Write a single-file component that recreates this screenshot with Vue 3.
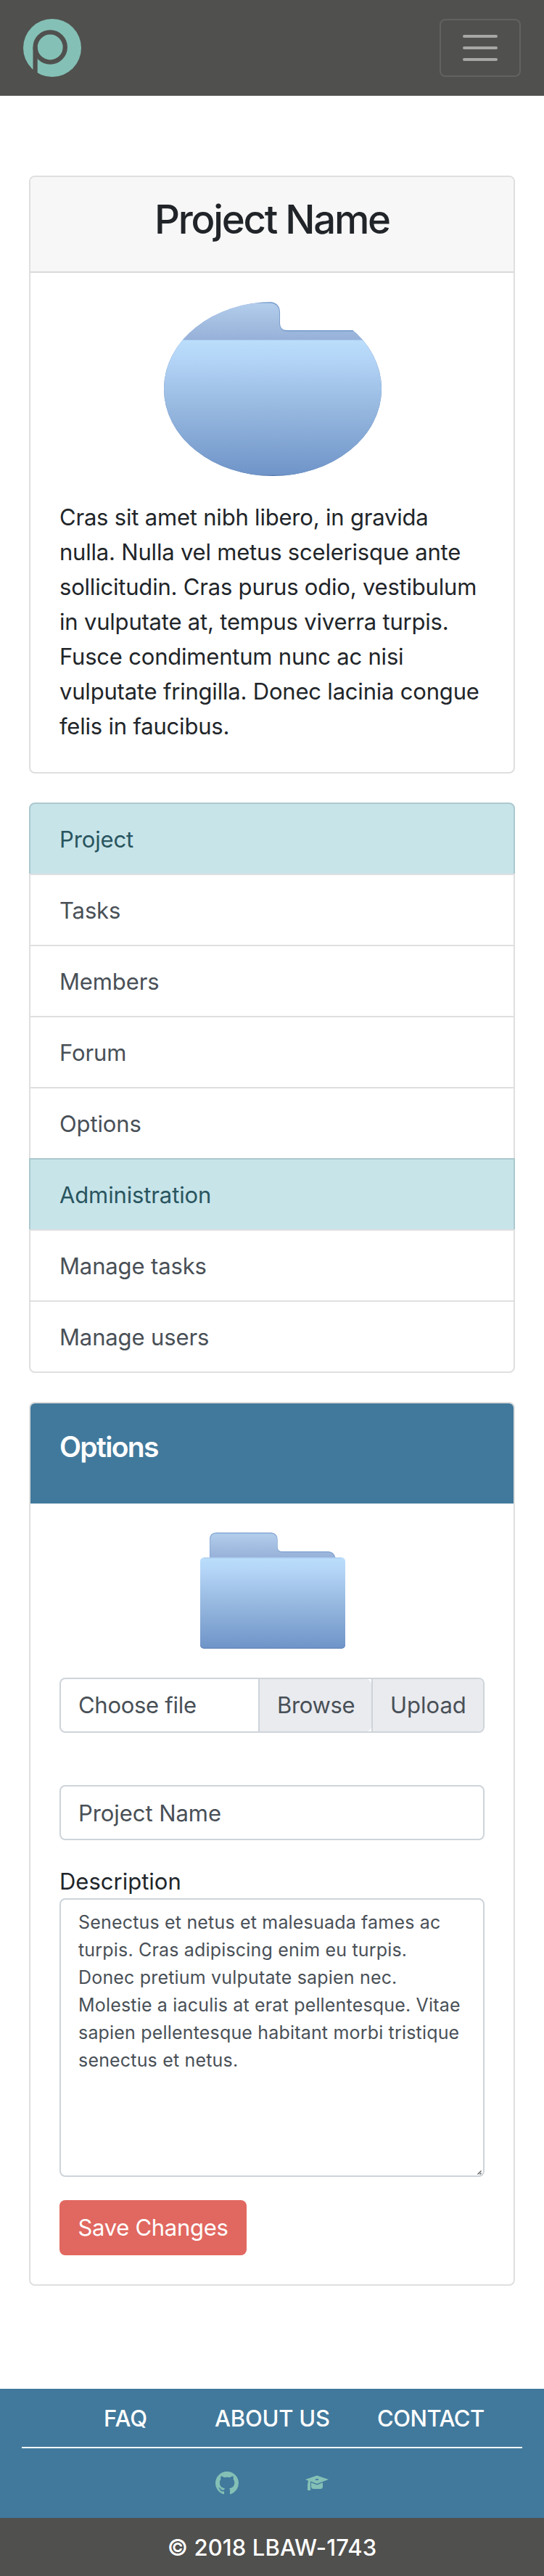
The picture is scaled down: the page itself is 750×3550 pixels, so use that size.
<script setup>
const projectText = [
  'Cras sit amet nibh libero, in gravida',
  'nulla. Nulla vel metus scelerisque ante',
  'sollicitudin. Cras purus odio, vestibulum',
  'in vulputate at, tempus viverra turpis.',
  'Fusce condimentum nunc ac nisi',
  'vulputate fringilla. Donec lacinia congue',
  'felis in faucibus.',
].join('\n')

const menu = [
  { label: 'Project', heading: true },
  { label: 'Tasks' },
  { label: 'Members' },
  { label: 'Forum' },
  { label: 'Options' },
  { label: 'Administration', heading: true },
  { label: 'Manage tasks' },
  { label: 'Manage users' },
]

const description = [
  'Senectus et netus et malesuada fames ac',
  'turpis. Cras adipiscing enim eu turpis.',
  'Donec pretium vulputate sapien nec.',
  'Molestie a iaculis at erat pellentesque. Vitae',
  'sapien pellentesque habitant morbi tristique',
  'senectus et netus.',
].join('\n')
</script>

<template>
  <div class="page">
    <svg class="defs" width="0" height="0" aria-hidden="true">
      <defs>
        <linearGradient id="tabFill" x1="0" y1="0" x2="0" y2="1">
          <stop offset="0" stop-color="#b3cdec" />
          <stop offset="1" stop-color="#92acd5" />
        </linearGradient>
        <linearGradient id="frontFill" x1="0" y1="0" x2="0" y2="1">
          <stop offset="0" stop-color="#bbdefc" />
          <stop offset="0.15" stop-color="#b3d4f6" />
          <stop offset="0.5" stop-color="#97b9e0" />
          <stop offset="1" stop-color="#6f94c8" />
        </linearGradient>
        <symbol id="folder" viewBox="0 0 200 160">
          <path d="M13 40V10Q13 0 22 0H98Q106.700 1 106.700 10V20Q107 26 113 26H177Q187 27 187 40Z" fill="#7da1d0" />
          <path d="M13.600 40V10.500Q14 1.200 22 1.200H98Q106 2 106 10.500V20.500Q107 27.200 113 27.200H177Q186 28 186.500 40Z" fill="url(#tabFill)" />
          <rect x="0" y="40" width="200" height="120" rx="5" fill="#4d73ab" />
          <rect x="0" y="34.600" width="200" height="124.600" rx="5" fill="url(#frontFill)" />
          <path d="M5 35H195" stroke="#a3c4e8" stroke-width="0.8" />
        </symbol>
      </defs>
    </svg>

    <header class="navbar">
      <svg class="logo" viewBox="0 0 80 80">
        <circle cx="40" cy="40" r="40" fill="#84c0b5" />
        <circle cx="37.200" cy="39" r="20.600" fill="none" stroke="#50504e" stroke-width="6.300" />
        <path d="M13.500 39H19.700V80H13.500Z" fill="#50504e" />
      </svg>
      <button class="toggler" aria-label="Toggle navigation">
        <svg width="60" height="60" viewBox="0 0 60 60">
          <path d="M8 14H52M8 30H52M8 46H52" stroke="#a7a7a6" stroke-width="4" stroke-linecap="round" />
        </svg>
      </button>
    </header>

    <main class="content">
      <section class="card">
        <div class="card-header"><h3>Project Name</h3></div>
        <div class="card-body">
          <svg class="round"><use href="#folder" /></svg>
          <p class="lead">{{ projectText }}</p>
        </div>
      </section>

      <nav class="menu">
        <a v-for="m in menu" :key="m.label" class="item" :class="{ heading: m.heading }">{{ m.label }}</a>
      </nav>

      <section class="card">
        <div class="options-header"><h5>Options</h5></div>
        <div class="card-body form-body">
          <svg class="thumb"><use href="#folder" /></svg>
          <div class="file-group">
            <span class="file-name">Choose file</span>
            <span class="browse"><span>Browse</span></span>
            <span class="upload">Upload</span>
          </div>
          <input class="name-input" value="Project Name" />
          <label class="label">Description</label>
          <div class="area-wrap">
            <textarea class="area" :value="description"></textarea>
            <svg class="grip" width="6" height="6" viewBox="0 0 6 6">
              <path d="M0.500 5.500L5.500 0.500M3.500 5.500L5.500 3.500" stroke="#555" stroke-width="1.200" />
            </svg>
          </div>
          <button class="save">Save Changes</button>
        </div>
      </section>
    </main>

    <footer>
      <div class="footer-top">
        <nav class="links"><a class="faq">FAQ</a><a class="about">ABOUT US</a><a class="contact">CONTACT</a></nav>
        <div class="social">
          <svg width="32" height="32" viewBox="0 0 16 16" fill="#84c0b5">
            <path d="M8 0C3.580 0 0 3.580 0 8c0 3.540 2.290 6.530 5.470 7.590.4.070.55-.17.55-.38 0-.19-.01-.82-.01-1.490-2.010.37-2.530-.49-2.690-.94-.09-.23-.48-.94-.82-1.130-.28-.15-.68-.52-.01-.53.63-.01 1.080.58 1.230.82.72 1.210 1.870.87 2.330.66.07-.52.28-.87.51-1.070-1.780-.2-3.640-.89-3.640-3.950 0-.87.31-1.590.82-2.150-.08-.2-.36-1.020.08-2.120 0 0 .67-.21 2.200.82.64-.18 1.320-.27 2-.27s1.360.09 2 .27c1.530-1.040 2.200-.82 2.200-.82.44 1.100.16 1.920.08 2.120.51.56.82 1.270.82 2.150 0 3.070-1.870 3.750-3.650 3.950.29.25.54.73.54 1.480 0 1.070-.01 1.930-.01 2.200 0 .21.15.46.55.38A8.010 8.010 0 0 0 16 8c0-4.420-3.580-8-8-8z" />
          </svg>
          <svg width="32" height="32" viewBox="0 0 32 32" fill="#84c0b5">
            <path fill-rule="evenodd" d="M16 5.500L32 11L16 17L7 13.600V18.500L7.200 26H3V18L4 12.800L0 11ZM14 10.200V12H18V10.200Z" />
            <path d="M8 15.300L16 18.500L24 15.300V20.500Q24 24 20.500 24H11.500Q8 24 8 20.500Z" />
          </svg>
        </div>
      </div>
      <div class="copyright">© 2018 LBAW-1743</div>
    </footer>
  </div>
</template>

<style>
body { margin: 0; background: #fff; }
</style>

<style scoped>
.page {
  width: 750px;
  height: 3550px;
  display: flex;
  flex-direction: column;
  overflow: hidden;
  background: #fff;
  color: #212529;
  font: 400 31px/48px Inter, "Liberation Sans", sans-serif;
}
.page * { box-sizing: border-box; }
.defs { display: block; flex: none; height: 0; }
.navbar {
  flex: none;
  height: 132px;
  padding: 26px 32px;
  display: flex;
  justify-content: space-between;
  background: #50504e;
}
.logo { width: 80px; height: 80px; }
.toggler {
  width: 112px;
  height: 80px;
  padding: 0;
  display: flex;
  align-items: center;
  justify-content: center;
  background: none;
  border: 2px solid #626260;
  border-radius: 8px;
}
.content {
  padding: 110px 40px 0;
  display: flex;
  flex-direction: column;
  gap: 40px;
}
.card {
  border: 2px solid #dfdfdf;
  border-radius: 8px;
  overflow: hidden;
}
.card-header {
  height: 132px;
  padding-top: 24px;
  background: #f7f7f7;
  border-bottom: 2px solid #dadada;
  text-align: center;
}
h3 {
  margin: 0;
  font-size: 54.5px;
  line-height: 68px;
  font-weight: 500;
  letter-spacing: -2.25px;
}
.card-body {
  padding: 40px;
  display: flex;
  flex-direction: column;
}
.round {
  width: 300px;
  height: 240px;
  margin-left: 2px;
  border-radius: 50%;
  align-self: center;
  overflow: hidden;
}
.lead {
  margin: 33px 0 -1px;
  white-space: pre;
  letter-spacing: -0.2px;
}
.menu { display: flex; flex-direction: column; }
.item {
  height: 100px;
  margin-bottom: -2px;
  padding: 25px 40px 0;
  border: 2px solid #dfdfdf;
  color: #495057;
  letter-spacing: -0.13px;
}
.item.heading {
  background: #c7e4e9;
  border-color: #abc8ce;
  color: #29555f;
}
.item:first-child { border-radius: 8px 8px 0 0; }
.item:last-child { border-radius: 0 0 8px 8px; margin-bottom: 0; }
.options-header {
  height: 138px;
  padding: 36px 40px 0;
  background: #41799c;
  color: #fff;
}
h5 {
  margin: 0;
  font-size: 39px;
  line-height: 48px;
  font-weight: 600;
  letter-spacing: -1.65px;
}
.thumb {
  width: 200px;
  height: 160px;
  margin-left: 2px;
  align-self: center;
}
.file-group, .name-input, .area {
  border: 2px solid #ced4da;
  border-radius: 8px;
  background: #fff;
  color: #495057;
}
.file-group {
  height: 76px;
  margin: 40px 0 72px;
  display: flex;
  line-height: 72px;
  overflow: hidden;
}
.file-name { width: 272px; padding-left: 24px; letter-spacing: -0.28px; }
.browse {
  width: 158px;
  border-left: 2px solid #ced4da;
  border-right: 2px solid #ced4da;
}
.browse span {
  display: block;
  height: 72px;
  padding-left: 24px;
  border-radius: 0 7px 7px 0;
  background: #e9ebef;
  letter-spacing: -0.34px;
}
.upload { flex: 1; padding-left: 24px; background: #e9ebef; }
.name-input {
  height: 76px;
  margin: 0;
  padding: 0 24px;
  font: inherit;
  letter-spacing: -0.06px;
  outline: 0;
}
.label { margin: 33px 0 -1px; }
.area-wrap {
  position: relative;
  height: 384px;
}
.area {
  display: block;
  width: 100%;
  height: 100%;
  margin: 0;
  padding: 12px 24px;
  font: 400 25px/38px Inter, "Liberation Sans", sans-serif;
  letter-spacing: 0.18px;
  white-space: pre;
  resize: none;
  overflow: hidden;
  outline: 0;
}
.grip { position: absolute; right: 4px; bottom: 3px; }
.save {
  align-self: flex-start;
  width: 258px;
  height: 76px;
  margin: 32px 0 0;
  padding: 0;
  border: 0;
  border-radius: 8px;
  background: #e16860;
  color: #fff;
  font: inherit;
  letter-spacing: -0.29px;
}
footer { margin-top: auto; color: #fff; font-weight: 500; }
.footer-top { height: 178px; padding: 0 30px; background: #41799c; }
.links {
  height: 82px;
  padding-top: 17px;
  display: flex;
  border-bottom: 2px solid #fff;
}
.faq { margin-left: 113px; width: 153px; }
.about { width: 224px; letter-spacing: -0.21px; }
.contact { letter-spacing: -0.51px; }
.social {
  margin-top: 32px;
  padding-left: 267px;
  display: flex;
  gap: 92px;
}
.copyright {
  height: 80px;
  padding-top: 17px;
  background: #50504e;
  text-align: center;
  letter-spacing: 0.11px;
}
</style>
